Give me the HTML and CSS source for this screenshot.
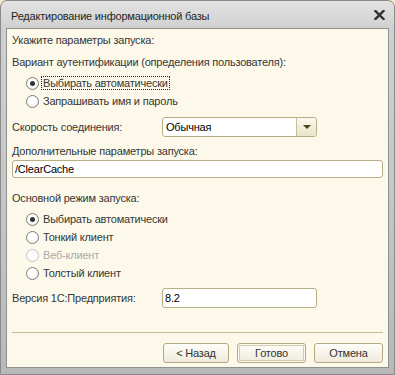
FILE: index.html
```html
<!DOCTYPE html>
<html lang="ru">
<head>
<meta charset="utf-8">
<title>Редактирование информационной базы</title>
<link rel="stylesheet" href="styles.css">
</head>
<body>
<div class="window">
  <div class="titlebar">
    <span class="title">Редактирование информационной базы</span>
    <span class="close" aria-label="Закрыть">
      <svg width="11" height="10" viewBox="0 0 11 10"><path d="M1.5 1 L9.5 9 M9.5 1 L1.5 9" stroke="#2f2f2f" stroke-width="2.4" stroke-linecap="square"/></svg>
    </span>
  </div>
  <div class="client">
    <div class="line first">Укажите параметры запуска:</div>
    <div class="line auth">Вариант аутентификации (определения пользователя):</div>
    <div class="radios r1">
      <div class="radio"><span class="dot checked"></span><span class="lbl focus">Выбирать автоматически</span></div>
      <div class="radio"><span class="dot"></span><span class="lbl">Запрашивать имя и пароль</span></div>
    </div>
    <div class="field-row speed">
      <span class="flabel">Скорость соединения:</span>
      <div class="combo"><span class="combo-text">Обычная</span><span class="combo-btn"><span class="tri"></span></span></div>
    </div>
    <div class="line extra">Дополнительные параметры запуска:</div>
    <div class="input wide">/ClearCache</div>
    <div class="line mode">Основной режим запуска:</div>
    <div class="radios r2">
      <div class="radio"><span class="dot checked"></span><span class="lbl">Выбирать автоматически</span></div>
      <div class="radio"><span class="dot"></span><span class="lbl">Тонкий клиент</span></div>
      <div class="radio disabled"><span class="dot"></span><span class="lbl">Веб-клиент</span></div>
      <div class="radio"><span class="dot"></span><span class="lbl">Толстый клиент</span></div>
    </div>
    <div class="field-row version">
      <span class="flabel">Версия 1С:Предприятия:</span>
      <div class="input short">8.2</div>
    </div>
    <div class="separator"></div>
    <div class="buttons">
      <button class="btn back">&lt; Назад</button>
      <button class="btn default">Готово</button>
      <button class="btn">Отмена</button>
    </div>
  </div>
</div>
</body>
</html>
```

FILE: styles.css
```css
html, body {
  margin: 0;
  padding: 0;
  background: #f3e9c8;
}
body {
  width: 395px;
  height: 375px;
  overflow: hidden;
  font-family: "Liberation Sans", Arial, sans-serif;
  font-size: 11px;
  letter-spacing: -0.2px;
  color: #363636;
}
.window {
  width: 395px;
  height: 375px;
  box-sizing: border-box;
  border: 1px solid #8a8a8a;
  border-radius: 7px 7px 0 0;
  background: linear-gradient(#e2e2e2 0px, #d0d0d0 28px, #c6c6c6 200px, #b8b8b8 375px);
  display: flex;
  flex-direction: column;
}
.titlebar {
  height: 27px;
  display: flex;
  align-items: center;
  justify-content: space-between;
  padding: 0 9px 0 10px;
}
.title {
  font-size: 11px;
  color: #262626;
  padding-top: 2px;
}
.close {
  display: flex;
  padding-top: 1px;
}
.client {
  margin: 0 5px 6px 5px;
  flex: 1;
  background: #fcf9ea;
  border: 1px solid #8f9090;
  padding: 2px 5px 0 5px;
  display: flex;
  flex-direction: column;
}
.line {
  height: 18px;
  line-height: 18px;
  white-space: nowrap;
}
.auth { margin-top: 4px; }
.extra { margin-top: 5px; }
.mode { margin-top: 11px; }
.radios {
  display: flex;
  flex-direction: column;
  padding-left: 14px;
  margin-top: 3px;
}
.radio {
  height: 18px;
  display: flex;
  align-items: center;
  gap: 2px;
}
.dot {
  width: 11px;
  height: 11px;
  border: 1px solid #7c7c7c;
  border-radius: 50%;
  background: radial-gradient(circle at 40% 40%, #ffffff 40%, #e4e4e4 100%);
  display: flex;
  align-items: center;
  justify-content: center;
  flex: none;
}
.dot.checked::after {
  content: "";
  width: 5px;
  height: 5px;
  border-radius: 50%;
  background: #333333;
}
.lbl {
  line-height: 12px;
  padding: 0 1px;
  border: 1px solid transparent;
}
.lbl.focus {
  border: 1px dotted #222222;
}
.radio.disabled .lbl { color: #a9a9a9; }
.radio.disabled .dot { border-color: #c4c4c4; background: #fbfbfb; }
.field-row {
  display: flex;
  align-items: center;
  height: 20px;
}
.speed { margin-top: 7px; }
.version { margin-top: 6px; }
.flabel {
  width: 150px;
  white-space: nowrap;
}
.combo {
  width: 155px;
  height: 20px;
  box-sizing: border-box;
  border: 1px solid #b7ae85;
  border-radius: 3px;
  background: #ffffff;
  display: flex;
  align-items: center;
  color: #000000;
}
.combo-text {
  flex: 1;
  padding-left: 3px;
}
.combo-btn {
  width: 19px;
  height: 18px;
  border-left: 1px solid #c7bf9b;
  border-radius: 0 2px 2px 0;
  background: linear-gradient(#fbf9ef, #e9e3c8);
  display: flex;
  align-items: center;
  justify-content: center;
}
.tri {
  width: 0;
  height: 0;
  border-left: 4px solid transparent;
  border-right: 4px solid transparent;
  border-top: 4px solid #4e4218;
}
.input {
  box-sizing: border-box;
  border: 1px solid #b7ae85;
  border-radius: 3px;
  background: #ffffff;
  color: #000000;
  padding-left: 2px;
  display: flex;
  align-items: center;
}
.input.wide {
  height: 18px;
  width: 371px;
}
.input.short {
  height: 20px;
  width: 155px;
}
.separator {
  margin-top: 24px;
  height: 1px;
  width: 371px;
  background: #c2bb98;
}
.buttons {
  margin-top: 10px;
  display: flex;
  justify-content: flex-end;
  gap: 8px;
  width: 371px;
}
.btn {
  height: 20px;
  width: 69px;
  box-sizing: border-box;
  border: 1px solid #b3aa82;
  border-radius: 3px;
  background: linear-gradient(#fefdf8, #efeadb);
  font-family: "Liberation Sans", Arial, sans-serif;
  font-size: 11px;
  letter-spacing: -0.2px;
  color: #333333;
  padding: 0;
}
.btn.back { width: 66px; }
.btn.default {
  box-shadow: inset 0 0 0 1px #fdfbf0, inset 0 0 0 2px #d4cca6;
}
```
